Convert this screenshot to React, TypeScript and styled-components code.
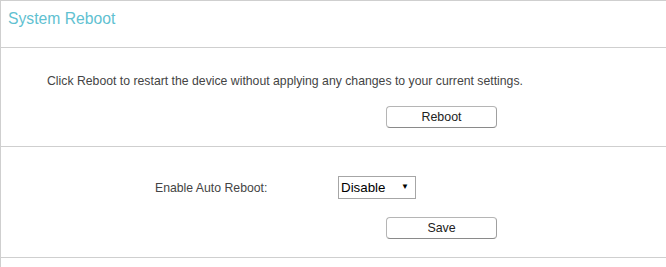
import React from 'react';
import styled, { createGlobalStyle } from 'styled-components';

const GlobalStyle = createGlobalStyle`
  html, body {
    margin: 0;
    padding: 0;
    background: #fff;
  }
  body {
    font-family: "Liberation Sans", Arial, sans-serif;
    color: #444;
  }
`;

const Panel = styled.div`
  box-sizing: border-box;
  min-height: 100vh;
  border-top: 1px solid #cfcfcf;
  border-left: 1px solid #cfcfcf;
`;

const Header = styled.div`
  box-sizing: border-box;
  height: 47px;
  padding: 8px 0 0 7px;
  border-bottom: 1px solid #cfcfcf;
`;

const Title = styled.h2`
  margin: 0;
  font-size: 15.7px;
  line-height: 20px;
  font-weight: normal;
  color: #5fc1d1;
`;

const Section = styled.section<{ $top: number }>`
  padding: ${(p) => p.$top}px 0 18px;
  border-bottom: 1px solid #cfcfcf;
`;

const Note = styled.p`
  margin: 0 0 18px;
  padding-left: 46px;
  font-size: 12.25px;
  line-height: 14px;
`;

const FieldRow = styled.div`
  display: flex;
  align-items: center;
  padding-left: 154px;
  margin-bottom: 18px;
`;

const Label = styled.label`
  width: 183px;
  font-size: 12.25px;
  line-height: 14px;
`;

const SelectBox = styled.div`
  position: relative;
  box-sizing: border-box;
  width: 78px;
  height: 23px;
  border: 1px solid #a6a6a6;
  background: #fff;
`;

const NativeSelect = styled.select`
  appearance: none;
  box-sizing: border-box;
  width: 100%;
  height: 100%;
  border: none;
  background: transparent;
  padding: 0 0 0 2px;
  font-family: "Liberation Sans", Arial, sans-serif;
  font-size: 13.33px;
  color: #000;
  outline: none;
`;

const Arrow = styled.span`
  position: absolute;
  right: 6px;
  top: 4px;
  font-size: 8px;
  line-height: 12px;
  color: #000;
  pointer-events: none;
`;

const ButtonRow = styled.div`
  padding-left: 385px;
`;

const Button = styled.button`
  box-sizing: border-box;
  width: 111px;
  height: 22px;
  padding: 0;
  border: 1px solid #b5b5b5;
  border-bottom-color: #8a8a8a;
  border-right-color: #a0a0a0;
  border-radius: 4px;
  background: #fff;
  font-family: "Liberation Sans", Arial, sans-serif;
  font-size: 12.4px;
  color: #222;
  display: block;
`;

export default function App() {
  return (
    <>
      <GlobalStyle />
      <Panel>
        <Header>
          <Title>System Reboot</Title>
        </Header>

        <Section $top={26}>
          <Note>
            Click Reboot to restart the device without applying any changes to your current settings.
          </Note>
          <ButtonRow>
            <Button type="button">Reboot</Button>
          </ButtonRow>
        </Section>

        <Section $top={29}>
          <FieldRow>
            <Label htmlFor="auto-reboot">Enable Auto Reboot:</Label>
            <SelectBox>
              <NativeSelect id="auto-reboot" defaultValue="disable">
                <option value="disable">Disable</option>
                <option value="enable">Enable</option>
              </NativeSelect>
              <Arrow>▼</Arrow>
            </SelectBox>
          </FieldRow>
          <ButtonRow>
            <Button type="button">Save</Button>
          </ButtonRow>
        </Section>
      </Panel>
    </>
  );
}
